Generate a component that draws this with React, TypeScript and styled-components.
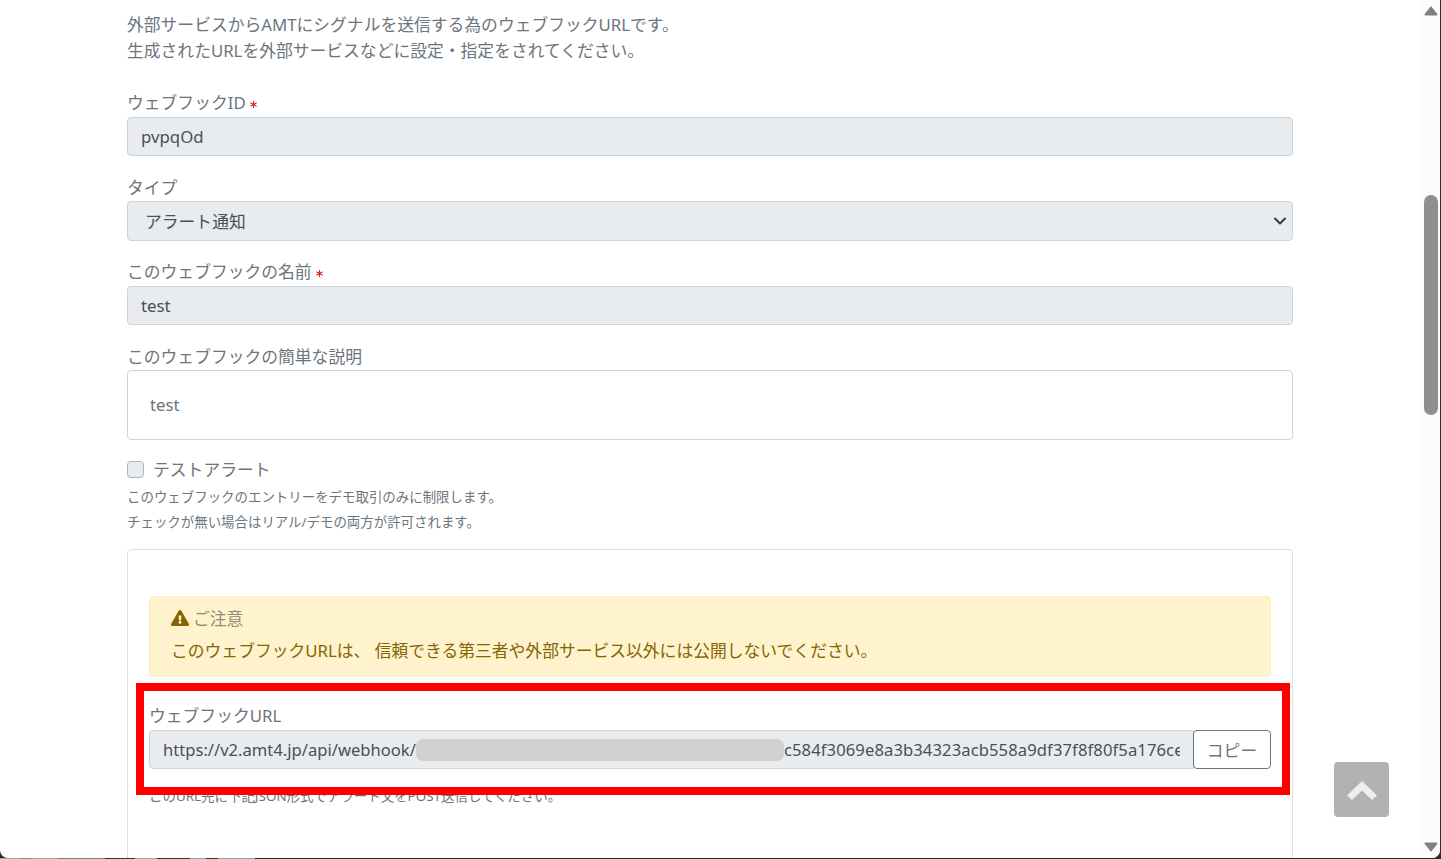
import React from "react";
import styled, { createGlobalStyle } from "styled-components";
import { FaAsterisk, FaExclamationTriangle } from "react-icons/fa";

const GlobalStyle = createGlobalStyle`
  html, body {
    margin: 0;
    height: 100%;
    overflow: hidden;
    background: #2b2b2b;
  }
  * {
    box-sizing: border-box;
  }
  body {
    font-family: "Noto Sans", "Noto Sans CJK JP", sans-serif;
    font-size: 16.8px;
    color: #6c757d;
  }
`;

const taskbarSegments = [
  { width: 21, color: "#a5a5a5" },
  { width: 12, color: "#7d9a4e" },
  { width: 25, color: "#a5a5a5" },
  { width: 47, color: "#6f8f47" },
  { width: 30, color: "#333" },
  { width: 22, color: "#a5a5a5" },
  { width: 33, color: "#333" },
  { width: 16, color: "#8aa9ab" },
  { width: 12, color: "#333" },
  { width: 37, color: "#8aa9ab" },
];

export default function App() {
  return (
    <>
      <GlobalStyle />
      <Desktop>
        <Screen>
          <Page>
            <Intro>
              外部サービスからAMTにシグナルを送信する為のウェブフックURLです。
              <br />
              生成されたURLを外部サービスなどに設定・指定をされてください。
            </Intro>

            <Field>
              <Label>
                ウェブフックID
                <RequiredMark />
              </Label>
              <ReadOnlyInput>pvpqOd</ReadOnlyInput>
            </Field>

            <Field>
              <Label>タイプ</Label>
              <SelectBox>
                アラート通知
                <Chevron viewBox="0 0 16 16">
                  <path d="M3 5.5l5 5 5-5" />
                </Chevron>
              </SelectBox>
            </Field>

            <Field>
              <Label>
                このウェブフックの名前
                <RequiredMark />
              </Label>
              <ReadOnlyInput>test</ReadOnlyInput>
            </Field>

            <TextAreaField>
              <Label>このウェブフックの簡単な説明</Label>
              <TextArea>test</TextArea>
            </TextAreaField>

            <CheckRow>
              <CheckBox />
              <CheckText>テストアラート</CheckText>
            </CheckRow>
            <Help>このウェブフックのエントリーをデモ取引のみに制限します。</Help>
            <Help>チェックが無い場合はリアル/デモの両方が許可されます。</Help>

            <Card>
              <Alert>
                <AlertTitle>
                  <FaExclamationTriangle size={18} color="#856404" />
                  ご注意
                </AlertTitle>
                <AlertText>
                  このウェブフックURLは、 信頼できる第三者や外部サービス以外には公開しないでください。
                </AlertText>
              </Alert>

              <UrlLabel>ウェブフックURL</UrlLabel>
              <UrlGroup>
                <UrlField>
                  <UrlValue>
                    https://v2.amt4.jp/api/webhook/
                    <Redaction />
                    <UrlHash>c584f3069e8a3b34323acb558a9df37f8f80f5a176ce</UrlHash>
                  </UrlValue>
                </UrlField>
                <CopyButton>コピー</CopyButton>
              </UrlGroup>
              <UrlHelp>このURL先に下記JSON形式でアラート文をPOST送信してください。</UrlHelp>
              <Highlight />
            </Card>
          </Page>

          <Scrollbar>
            <ScrollArrow viewBox="0 0 14 10">
              <path d="M7 1.5L12.5 8.5H1.5z" />
            </ScrollArrow>
            <Track>
              <Thumb />
            </Track>
            <ScrollArrow viewBox="0 0 14 10">
              <path d="M7 8.5L12.5 1.5H1.5z" />
            </ScrollArrow>
          </Scrollbar>

          <BackToTop>
            <BackToTopIcon viewBox="0 0 32 21">
              <path d="M16 1.5L30.5 15.5L26 19.5L16 10L6 19.5L1.5 15.5z" />
            </BackToTopIcon>
          </BackToTop>
        </Screen>

        <Taskbar>
          {taskbarSegments.map((segment, i) => (
            <TaskSegment key={i} $width={segment.width} $color={segment.color} />
          ))}
        </Taskbar>
      </Desktop>
    </>
  );
}

const Desktop = styled.div`
  width: 1441px;
  height: 859px;
  overflow: hidden;
`;

const Screen = styled.div`
  position: relative;
  display: flex;
  width: 1440px;
  height: 858px;
  overflow: hidden;
  background: #fff;
  border-radius: 0 0 8px 8px;
`;

const Page = styled.main`
  flex: 1;
  min-width: 0;
  padding: 12px 127px 0;
`;

const Intro = styled.p`
  margin: 0 0 26.4px;
  line-height: 26px;
`;

const Field = styled.div`
  margin-bottom: 18.6px;
`;

const TextAreaField = styled.div`
  margin-bottom: 17px;
`;

const Label = styled.div`
  display: flex;
  align-items: center;
  gap: 4px;
  height: 24.2px;
  margin-bottom: 2.4px;
`;

const RequiredMark = styled(FaAsterisk)`
  width: 7px;
  height: 7px;
  margin-top: 4px;
  color: #e0202f;
`;

const ReadOnlyInput = styled.div`
  display: flex;
  align-items: center;
  height: 39.2px;
  padding: 0 13px;
  background: #e9ecef;
  border: 1px solid #ced4da;
  border-radius: 4px;
  color: #495057;
`;

const SelectBox = styled.div`
  display: flex;
  align-items: center;
  justify-content: space-between;
  height: 39.2px;
  padding: 0 4px 0 17px;
  background: #e9ecef;
  border: 1px solid #ced4da;
  border-radius: 4px;
  color: #495057;
`;

const Chevron = styled.svg`
  width: 16px;
  height: 16px;
  fill: none;
  stroke: #343a40;
  stroke-width: 2;
  stroke-linecap: round;
  stroke-linejoin: round;
`;

const TextArea = styled.div`
  display: flex;
  align-items: center;
  height: 70px;
  padding: 0 22px 2px;
  border: 1px solid #ced4da;
  border-radius: 4px;
`;

const CheckRow = styled.div`
  display: flex;
  align-items: center;
  gap: 9px;
  height: 25px;
  margin-bottom: 3px;
`;

const CheckBox = styled.span`
  width: 17px;
  height: 17px;
  background: #e9ecef;
  border: 1px solid #adb5bd;
  border-radius: 4px;
`;

const CheckText = styled.span`
  margin-bottom: 2px;
`;

const Help = styled.div`
  height: 25px;
  font-size: 13.44px;
  line-height: 25px;
`;

const Card = styled.section`
  position: relative;
  height: 340px;
  margin-top: 14px;
  padding: 46px 21px 0;
  border: 1px solid #dfdfdf;
  border-radius: 4px;
`;

const Alert = styled.div`
  height: 81px;
  margin-bottom: 27px;
  padding: 9px 21px;
  background: #fff3cd;
  border: 1px solid #ffeeba;
  border-radius: 4px;
  color: #856404;
`;

const AlertTitle = styled.div`
  display: flex;
  align-items: center;
  gap: 4px;
  height: 24px;
  margin-bottom: 9px;
  color: #8d8d7a;
`;

const AlertText = styled.div`
  height: 24px;
  line-height: 24px;
`;

const UrlLabel = styled.div`
  height: 24px;
  margin-bottom: 2px;
  line-height: 24px;
`;

const UrlGroup = styled.div`
  display: flex;
  height: 39.2px;
`;

const UrlField = styled.div`
  display: flex;
  align-items: center;
  flex: 1;
  min-width: 0;
  padding: 0 13px;
  background: #e9ecef;
  border: 1px solid #ced4da;
  border-radius: 4px 0 0 4px;
  color: #495057;
  font-size: 16.6px;
`;

const UrlValue = styled.div`
  display: flex;
  align-items: center;
  flex: 1;
  min-width: 0;
  overflow: hidden;
  white-space: nowrap;
`;

const UrlHash = styled.span`
  letter-spacing: 0.1px;
`;

const Redaction = styled.span`
  flex: none;
  width: 368px;
  height: 22px;
  background: #d0d0d0;
  border-radius: 7px;
`;

const CopyButton = styled.button`
  flex: none;
  width: 78px;
  margin-left: -1px;
  padding: 0;
  background: #fff;
  border: 1px solid #6c757d;
  border-radius: 4px;
  color: #6c757d;
  font: inherit;
`;

const UrlHelp = styled.div`
  margin-top: 15px;
  font-size: 13.44px;
  line-height: 24px;
`;

// annotation drawn over the screenshot
const Highlight = styled.div`
  position: absolute;
  top: 133px;
  right: 2px;
  left: 8px;
  height: 112px;
  border: 8px solid #ff0000;
`;

const Scrollbar = styled.aside`
  display: flex;
  flex-direction: column;
  flex: none;
  width: 20px;
  padding: 6px 2px 6px 4px;
  background: #fcfcfc;
`;

const ScrollArrow = styled.svg`
  flex: none;
  width: 14px;
  height: 10px;
  fill: #808080;
  stroke: #808080;
  stroke-width: 2;
  stroke-linejoin: round;
`;

const Track = styled.div`
  flex: 1;
  padding-top: 179px;
`;

const Thumb = styled.div`
  height: 220px;
  background: #8f8f8f;
  border-radius: 7px;
`;

const BackToTop = styled.button`
  position: absolute;
  top: 762px;
  left: 1334px;
  display: flex;
  align-items: center;
  justify-content: center;
  width: 55px;
  height: 55px;
  padding: 2px 0 0;
  background: #b2b2b2;
  border: 0;
  border-radius: 4px;
`;

const BackToTopIcon = styled.svg`
  width: 32px;
  height: 21px;
  fill: #eee;
  stroke: #eee;
  stroke-width: 1;
  stroke-linejoin: round;
`;

const Taskbar = styled.div`
  display: flex;
  height: 1px;
`;

const TaskSegment = styled.span<{ $width: number; $color: string }>`
  width: ${({ $width }) => $width}px;
  background: ${({ $color }) => $color};
`;
